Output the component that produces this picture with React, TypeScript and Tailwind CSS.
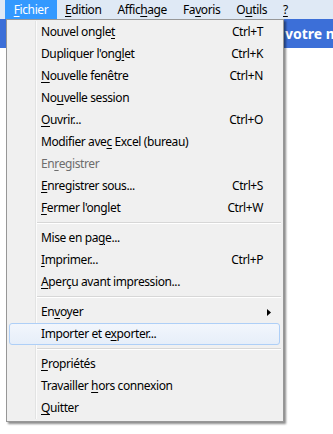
import React from 'react';

type Item = {
  label: React.ReactNode;
  shortcut?: string;
  disabled?: boolean;
  hover?: boolean;
  submenu?: boolean;
};

const U = ({ children }: { children: React.ReactNode }) => <span className="underline underline-offset-2">{children}</span>;

const groups: Item[][] = [
  [
    { label: <>Nouvel ongle<U>t</U></>, shortcut: 'Ctrl+T' },
    { label: <>Dupliquer l'ong<U>l</U>et</>, shortcut: 'Ctrl+K' },
    { label: <><U>N</U>ouvelle fenêtre</>, shortcut: 'Ctrl+N' },
    { label: <>No<U>u</U>velle session</> },
    { label: <><U>O</U>uvrir...</>, shortcut: 'Ctrl+O' },
    { label: <>Modifier ave<U>c</U> Excel (bureau)</> },
    { label: <>En<U>r</U>egistrer</>, disabled: true },
    { label: <><U>E</U>nregistrer sous...</>, shortcut: 'Ctrl+S' },
    { label: <><U>F</U>ermer l'onglet</>, shortcut: 'Ctrl+W' },
  ],
  [
    { label: <>Mise en pa<U>g</U>e...</> },
    { label: <><U>I</U>mprimer...</>, shortcut: 'Ctrl+P' },
    { label: <><U>A</U>perçu avant impression...</> },
  ],
  [
    { label: <>En<U>v</U>oyer</>, submenu: true },
    { label: <>Importer et e<U>x</U>porter...</>, hover: true },
  ],
  [
    { label: <><U>P</U>ropriétés</> },
    { label: <>Travailler <U>h</U>ors connexion</> },
    { label: <><U>Q</U>uitter</> },
  ],
];

const MenuRow = ({ item }: { item: Item }) => (
  <div
    className={`relative flex h-[22px] items-center ${
      item.hover
        ? 'mx-[2px] mr-[3px] rounded-[3px] border border-[#aecff7] bg-gradient-to-b from-[#f2f6fc] to-[#e6eef9] pl-[31px] pr-[17px]'
        : 'pl-[34px] pr-[20px]'
    } ${item.disabled ? 'text-[#6d6d6d]' : 'text-black'}`}
  >
    <span className="flex-1">{item.label}</span>
    {item.shortcut && <span>{item.shortcut}</span>}
    {item.submenu && (
      <svg width="4" height="7" viewBox="0 0 4 7" className="absolute right-[12px] top-[8px]">
        <path d="M0 0 L4 3.5 L0 7 Z" fill="#000" />
      </svg>
    )}
  </div>
);

const App = () => {
  const topItems = [
    <><U>F</U>ichier</>,
    <><U>E</U>dition</>,
    <>Affic<U>h</U>age</>,
    <>Fa<U>v</U>oris</>,
    <>O<U>u</U>tils</>,
    <><U>?</U></>,
  ];

  return (
    <div className="relative h-[434px] w-[333px] overflow-hidden bg-white text-[12px] tracking-[-0.4px] font-['Noto_Sans',sans-serif]">
      <div className="flex h-[19px] items-center bg-[#dfe9f5] pl-[5px]">
        {topItems.map((t, i) => (
          <div
            key={i}
            className={`flex h-[19px] items-center ${i === 0 ? 'w-[52px] justify-center bg-[#3399ff] text-white' : 'px-[8px] text-black'}`}
          >
            {t}
          </div>
        ))}
      </div>
      <div className="flex h-[29px] items-center overflow-hidden bg-[#3c6fd8] pl-[285px]">
        <span className="whitespace-nowrap text-[14px] font-bold tracking-normal text-white">votre mo</span>
      </div>

      {/* dropdown */}
      <div className="absolute left-[6px] top-[19px] w-[278px] border border-[#979797] bg-[#f0f0f0] pb-[2px] pt-[1px] shadow-[2px_2px_2px_rgba(0,0,0,0.45)]">
        <div className="absolute bottom-[2px] left-[28px] top-[1px] w-[2px] border-l border-[#e2e3e3] bg-white/70" />
        {groups.map((g, gi) => (
          <React.Fragment key={gi}>
            {gi > 0 && (
              <div className="flex h-[8px] items-center pl-[30px] pr-[2px]">
                <div className="h-[2px] w-full border-t border-[#d7d7d7] bg-white" />
              </div>
            )}
            {g.map((it, ii) => (
              <MenuRow key={ii} item={it} />
            ))}
          </React.Fragment>
        ))}
      </div>
    </div>
  );
};

export default App;
